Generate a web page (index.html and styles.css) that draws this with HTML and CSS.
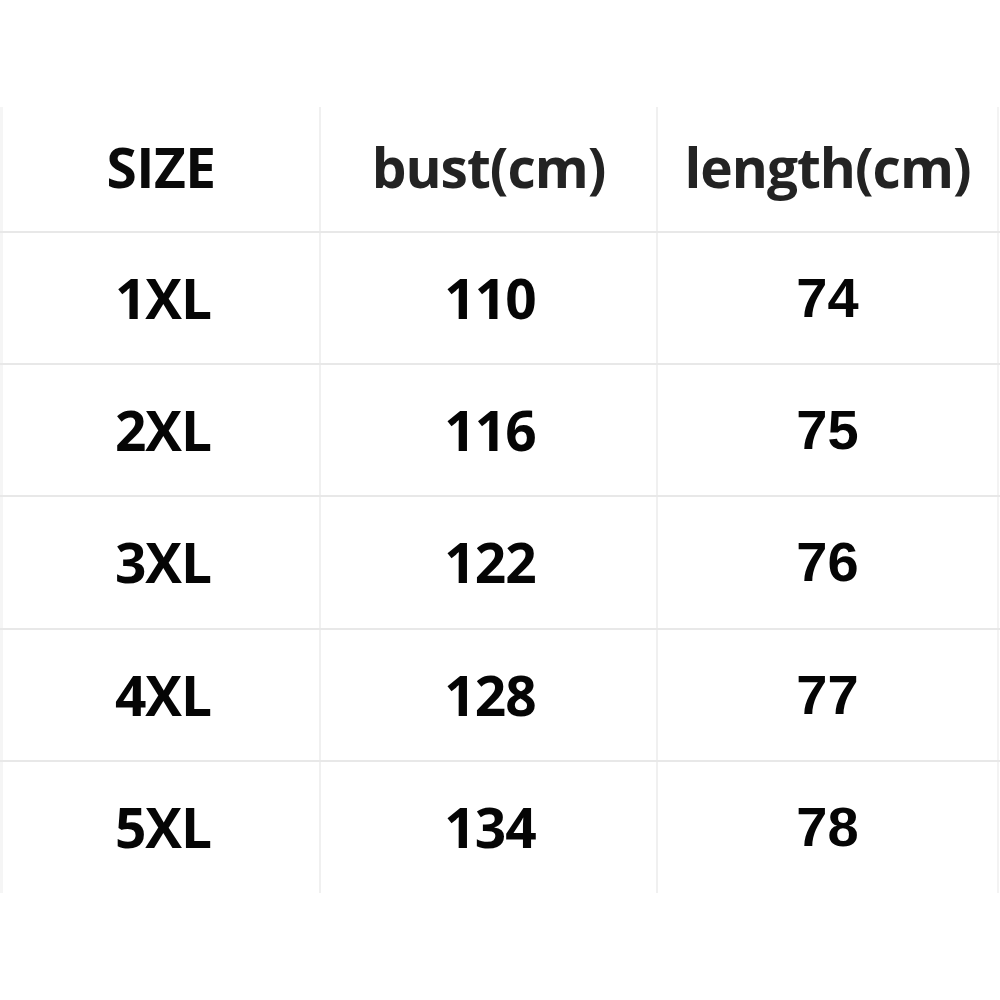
FILE: index.html
```html
<!DOCTYPE html>
<html>
<head>
<meta charset="utf-8">
<link rel="stylesheet" href="styles.css">
</head>
<body>
<div class="sheet">
  <div class="row head">
    <div class="cell c1 seg">SIZE</div>
    <div class="cell c2 seg">bust(cm)</div>
    <div class="cell c3 seg">length(cm)</div>
  </div>
  <div class="row r1">
    <div class="cell c1 seg">1XL</div>
    <div class="cell c2 seg">110</div>
    <div class="cell c3 ari">74</div>
  </div>
  <div class="row r2">
    <div class="cell c1 seg">2XL</div>
    <div class="cell c2 seg">116</div>
    <div class="cell c3 ari">75</div>
  </div>
  <div class="row r3">
    <div class="cell c1 seg">3XL</div>
    <div class="cell c2 seg">122</div>
    <div class="cell c3 ari">76</div>
  </div>
  <div class="row r4">
    <div class="cell c1 seg">4XL</div>
    <div class="cell c2 seg">128</div>
    <div class="cell c3 ari">77</div>
  </div>
  <div class="row r5 last">
    <div class="cell c1 seg">5XL</div>
    <div class="cell c2 seg">134</div>
    <div class="cell c3 ari">78</div>
  </div>
</div>
</body>
</html>
```
FILE: styles.css
```css
html, body {
  margin: 0;
  padding: 0;
  background: #ffffff;
}
body {
  width: 1000px;
  height: 1000px;
  overflow: hidden;
}
.sheet {
  margin-top: 107px;
  width: 1000px;
  display: flex;
  flex-direction: column;
}
.row {
  display: grid;
  grid-template-columns: 321px 337px 341px 1px;
  border-bottom: 2px solid #e8e8e8;
  box-sizing: border-box;
}
.row.head { height: 126px; }
.row.r1, .row.r2, .row.r4 { height: 132px; }
.row.r3 { height: 133px; }
.row.r5 { height: 131px; }
.row.last { border-bottom: none; }
.cell {
  display: flex;
  align-items: center;
  justify-content: center;
  color: #050505;
  font-size: 55px;
  font-weight: 700;
  box-sizing: border-box;
}
.c1 {
  border-left: 3px solid #f5f5f5;
  border-right: 2px solid #f0f0f0;
}
.c2 {
  border-right: 2px solid #f0f0f0;
}
.c3 {
  border-right: 2px solid #f3f3f3;
}
.head .cell {
  color: #232323;
  padding-bottom: 6px;
}
.head .c1 {
  color: #0a0a0a;
  letter-spacing: -0.5px;
}
.seg {
  font-family: "Open Sans", "DejaVu Sans", sans-serif;
  letter-spacing: -1px;
}
.ari {
  font-family: "Liberation Sans", Arial, sans-serif;
  font-size: 56px;
}
.r1 .cell, .r2 .cell, .r3 .cell, .r4 .cell, .r5 .cell {
  padding-bottom: 2px;
}
.r1 .c1, .r2 .c1, .r3 .c1, .r4 .c1, .r5 .c1 {
  padding-left: 4px;
}
.r1 .c2, .r2 .c2, .r3 .c2, .r4 .c2, .r5 .c2 {
  padding-left: 3px;
}
```
